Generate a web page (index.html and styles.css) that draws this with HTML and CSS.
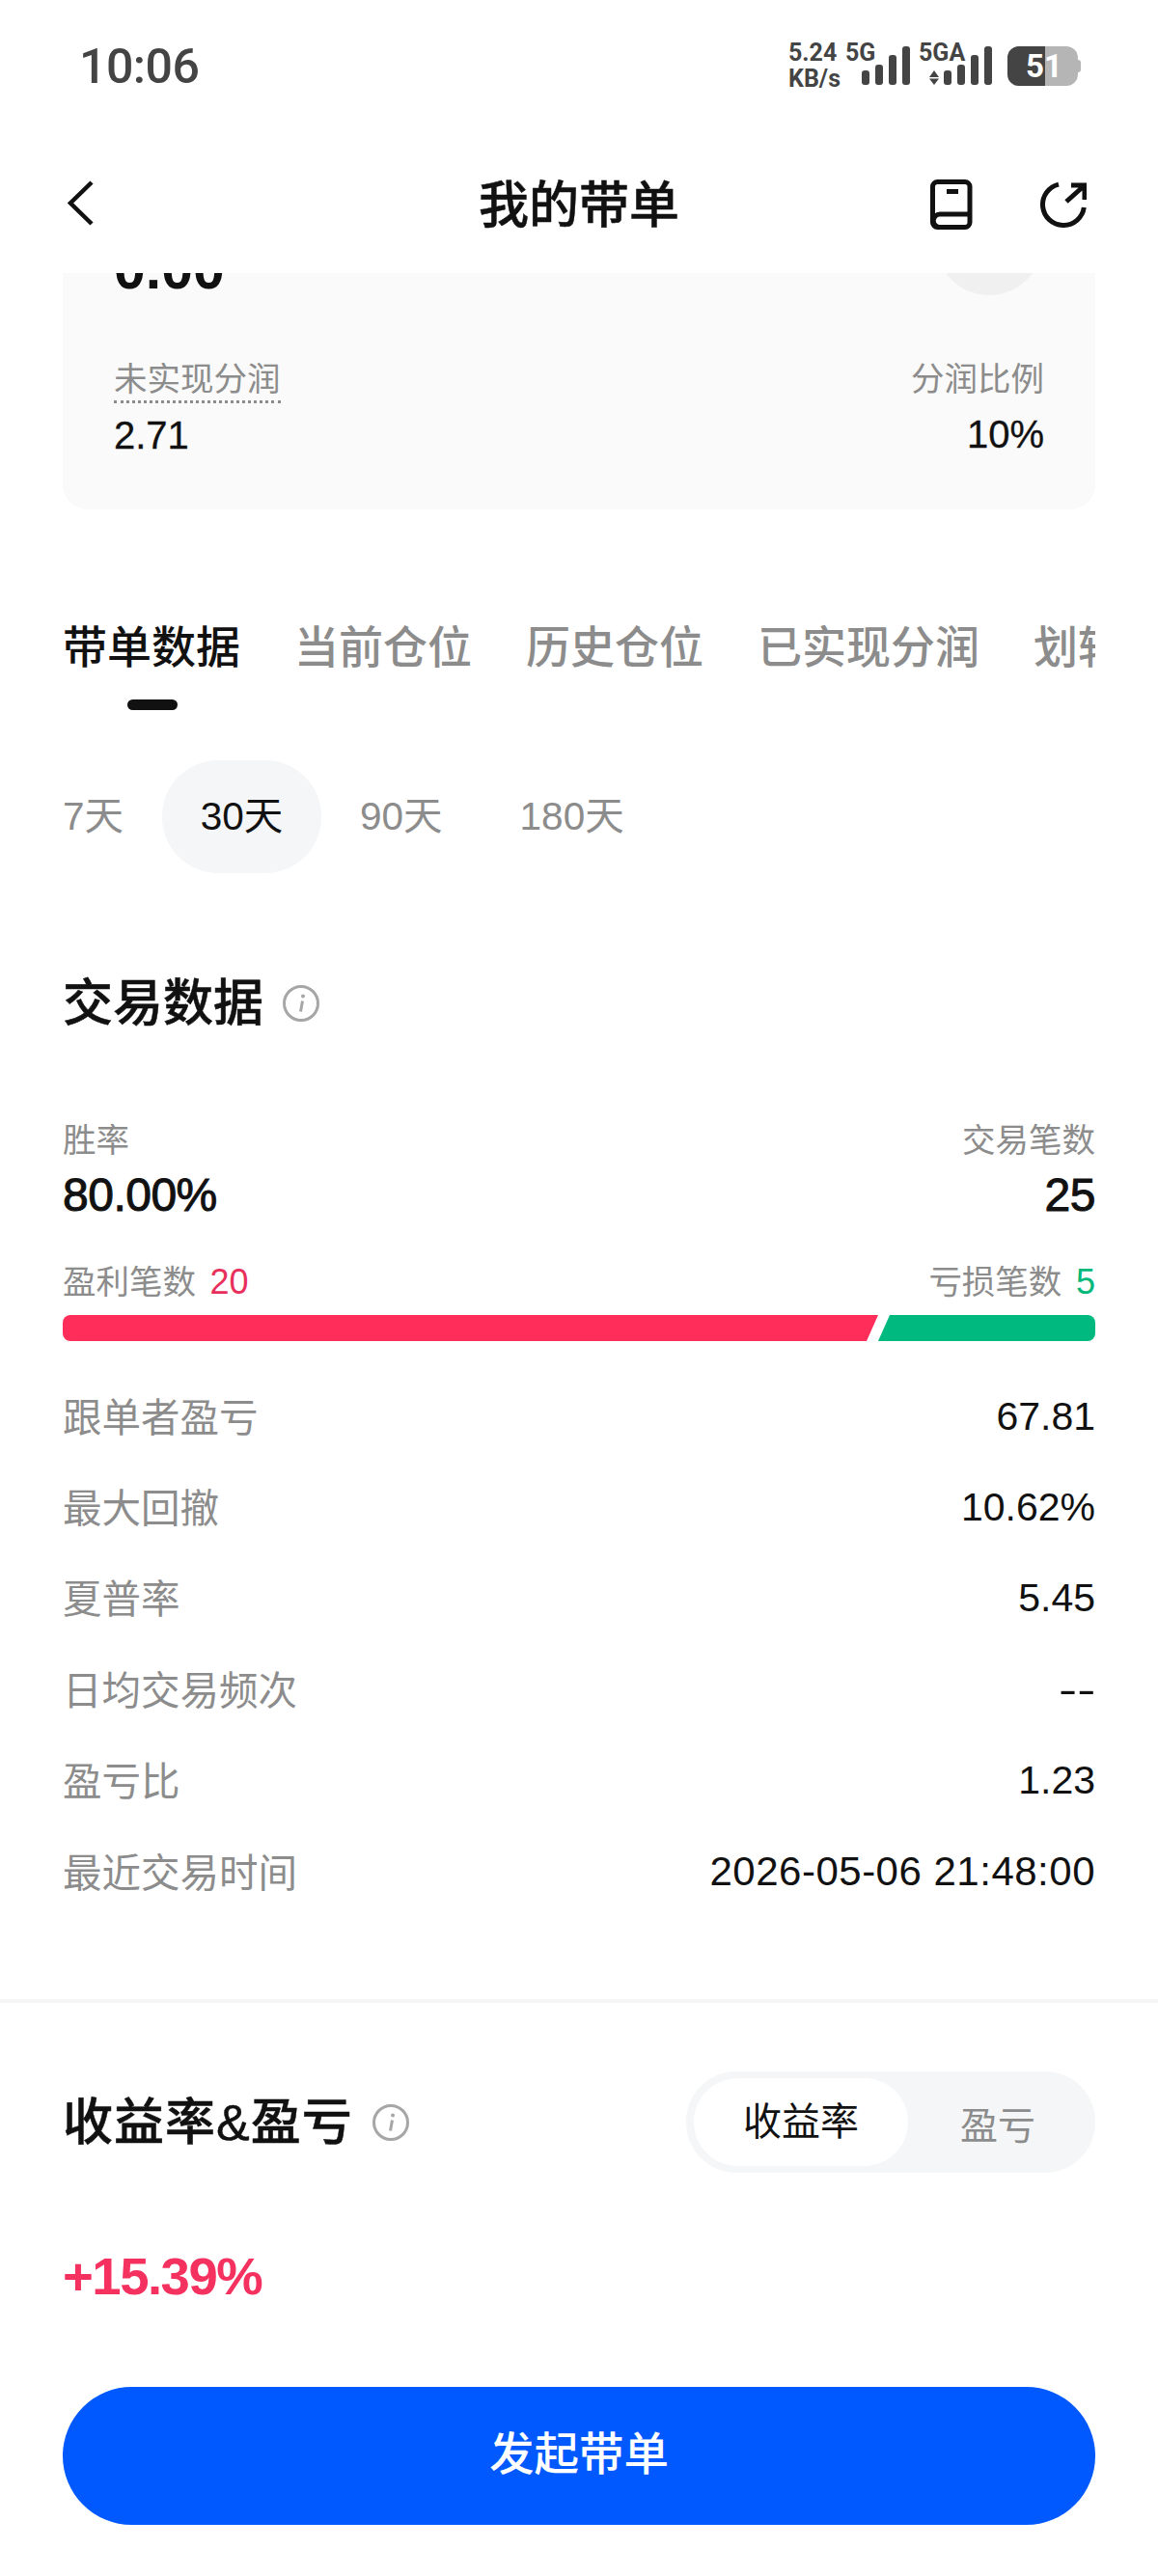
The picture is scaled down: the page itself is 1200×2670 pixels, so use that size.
FILE: index.html
```html
<!DOCTYPE html>
<html lang="zh">
<head>
<meta charset="utf-8">
<meta name="viewport" content="width=device-width, initial-scale=1">
<title>我的带单</title>
<link rel="stylesheet" href="styles.css">
</head>
<body>
<div class="phone">
  <div class="statusbar">
    <span class="clock">10:06</span>
    <div class="status-icons">
      <div class="speed">5.24<br>KB/s</div>
      <div class="net">
        <span class="net-name">5G</span>
        <svg class="signal" width="51" height="40" viewBox="0 0 51 40"><rect x="0" y="25" width="8" height="15" rx="3"/><rect x="14" y="19" width="8" height="21" rx="3"/><rect x="28" y="9" width="8" height="31" rx="3"/><rect x="42" y="0" width="8" height="40" rx="3"/></svg>
      </div>
      <div class="net net-a">
        <span class="net-name">5GA</span>
        <svg class="signal" width="65" height="40" viewBox="0 0 65 40"><path d="M0 32l5-7 5 7zM0 33.500l5 6.500 5-6.500z"/><rect x="15" y="25" width="8" height="15" rx="3"/><rect x="29" y="19" width="8" height="21" rx="3"/><rect x="43" y="9" width="8" height="31" rx="3"/><rect x="57" y="0" width="8" height="40" rx="3"/></svg>
      </div>
      <div class="battery"><span class="battery-fill"></span><span class="battery-num">51</span></div>
    </div>
  </div>

  <div class="navbar">
    <svg class="nav-back" width="27" height="47" viewBox="0 0 27 47"><path d="M25 2L3 23.500 25 45" fill="none" stroke="#111" stroke-width="4.500"/></svg>
    <h1 class="nav-title">我的带单</h1>
    <div class="nav-actions">
      <svg width="44" height="52" viewBox="0 0 44 52"><rect x="2.500" y="2.500" width="38.500" height="47" rx="5" fill="none" stroke="#111" stroke-width="5"/><path d="M41 36H10a6.500 6.500 0 0 0 0 13.500" fill="none" stroke="#111" stroke-width="5"/><rect x="17" y="10" width="12" height="5" fill="#111"/></svg>
      <svg width="48" height="48" viewBox="0 0 48 48"><path d="M19 3.100A21.500 21.500 0 1 0 45.300 27" fill="none" stroke="#111" stroke-width="5"/><path d="M32 4h14v15M46 4L27 21" fill="none" stroke="#111" stroke-width="5"/></svg>
    </div>
  </div>

  <div class="content">
    <div class="card">
      <div class="card-top">
        <span class="card-total">0.00</span>
        <span class="card-circle"></span>
      </div>
      <div class="card-row">
        <div>
          <div class="label"><span class="dotted">未实现分润</span></div>
          <div class="card-val">2.71</div>
        </div>
        <div class="right">
          <div class="label">分润比例</div>
          <div class="card-val">10%</div>
        </div>
      </div>
    </div>

    <div class="tabs">
      <div class="tab tab-on">带单数据<i class="tab-line"></i></div>
      <div class="tab">当前仓位</div>
      <div class="tab">历史仓位</div>
      <div class="tab">已实现分润</div>
      <div class="tab">划转记录</div>
    </div>

    <div class="periods">
      <span class="period">7天</span>
      <span class="period period-on">30天</span>
      <span class="period">90天</span>
      <span class="period">180天</span>
    </div>

    <div class="sec-head">
      <h2 class="sec-title">交易数据</h2>
      <svg class="info" width="38" height="38" viewBox="0 0 38 38"><circle cx="19" cy="19" r="17.500" fill="none" stroke="#a6a6a6" stroke-width="3"/><path d="M20.500 16.500l-2 11" stroke="#a6a6a6" stroke-width="3" fill="none"/><circle cx="21" cy="11.500" r="2" fill="#a6a6a6"/></svg>
    </div>

    <div class="summary">
      <div>
        <div class="label">胜率</div>
        <div class="big-val">80.00%</div>
      </div>
      <div class="right">
        <div class="label">交易笔数</div>
        <div class="big-val">25</div>
      </div>
    </div>

    <div class="ratio-labels">
      <div class="label">盈利笔数 <span class="num-red">20</span></div>
      <div class="label">亏损笔数 <span class="num-green">5</span></div>
    </div>
    <div class="ratio-bar">
      <span class="bar-red"></span>
      <span class="bar-green"></span>
    </div>

    <div class="stats">
      <div class="stat"><span>跟单者盈亏</span><b>67.81</b></div>
      <div class="stat"><span>最大回撤</span><b>10.62%</b></div>
      <div class="stat"><span>夏普率</span><b>5.45</b></div>
      <div class="stat"><span>日均交易频次</span><b class="stat-dash">--</b></div>
      <div class="stat"><span>盈亏比</span><b>1.23</b></div>
      <div class="stat"><span>最近交易时间</span><b class="stat-date">2026-05-06 21:48:00</b></div>
    </div>

    <div class="divider"></div>

    <div class="profit-head">
      <div class="sec-head sec-head-flat">
        <h2 class="sec-title sec-title-wide">收益率&amp;盈亏</h2>
        <svg class="info" width="38" height="38" viewBox="0 0 38 38"><circle cx="19" cy="19" r="17.500" fill="none" stroke="#a6a6a6" stroke-width="3"/><path d="M20.500 16.500l-2 11" stroke="#a6a6a6" stroke-width="3" fill="none"/><circle cx="21" cy="11.500" r="2" fill="#a6a6a6"/></svg>
      </div>
      <div class="switch">
        <span class="switch-on">收益率</span>
        <span class="switch-off">盈亏</span>
      </div>
    </div>

    <div class="profit">+15.39%</div>
  </div>

  <div class="footer">
    <button class="cta">发起带单</button>
  </div>
</div>
</body>
</html>
```

FILE: styles.css
```css
* {
  box-sizing: border-box;
}
html, body {
  margin: 0;
  padding: 0;
  background: #fff;
}
body {
  font-family: "Liberation Sans", "Noto Sans CJK SC", sans-serif;
  color: #111;
}
.phone {
  width: 1200px;
  height: 2670px;
  display: flex;
  flex-direction: column;
  overflow: hidden;
  background: #fff;
}

/* status bar */
.statusbar {
  height: 140px;
  flex: none;
  display: flex;
  justify-content: space-between;
  align-items: flex-start;
  padding: 41px 83px 0 82px;
}
.clock {
  font-family: Roboto, sans-serif;
  font-size: 50px;
  line-height: 56px;
  font-weight: 500;
  letter-spacing: -0.5px;
  color: #444;
}
.status-icons {
  display: flex;
  align-items: flex-start;
  padding-top: 3px;
  color: #444;
}
.speed {
  width: 59px;
  margin-top: -3px;
  font-family: Roboto, sans-serif;
  font-size: 25px;
  line-height: 27px;
  font-weight: 700;
}
.net {
  display: flex;
  position: relative;
  width: 76px;
  height: 46px;
}
.net-name {
  margin-top: -3px;
  font-family: Roboto, sans-serif;
  font-size: 25px;
  line-height: 27px;
  font-weight: 700;
}
.net .signal {
  position: absolute;
  left: 17px;
  top: 4px;
  fill: #444;
}
.net-a {
  width: 92px;
}
.net-a .signal {
  left: 11px;
}
.battery {
  position: relative;
  width: 73px;
  height: 41px;
  margin-top: 4px;
  border-radius: 12px;
  background: #b5b5b5;
}
.battery::after {
  content: "";
  position: absolute;
  right: -3px;
  top: 14px;
  width: 3px;
  height: 13px;
  border-radius: 0 3px 3px 0;
  background: #b5b5b5;
}
.battery-fill {
  display: block;
  width: 39px;
  height: 41px;
  border-radius: 12px 0 0 12px;
  background: #444;
}
.battery-num {
  position: absolute;
  left: 19px;
  top: 0;
  font-family: Roboto, sans-serif;
  font-size: 33px;
  line-height: 41px;
  font-weight: 700;
  color: #fff;
}

/* nav */
.navbar {
  height: 143px;
  flex: none;
  display: flex;
  justify-content: space-between;
  align-items: center;
  position: relative;
  padding: 0 74px 0 70px;
  background: #fff;
}
.nav-back {
  margin-top: -2px;
}
.nav-title {
  position: absolute;
  left: 0;
  right: 0;
  top: 41px;
  margin: 0;
  text-align: center;
  font-size: 52px;
  line-height: 64px;
  font-weight: 500;
  -webkit-text-stroke: 0.5px #111;
}
.nav-actions {
  display: flex;
  align-items: center;
  gap: 70px;
}

/* scrolled content */
.content {
  flex: 1;
  overflow: hidden;
  padding: 0 65px;
}
.card {
  margin-top: -118px;
  height: 363px;
  padding: 0 53px;
  border-radius: 26px;
  background: #fafafa;
}
.card-top {
  height: 204px;
  display: flex;
  justify-content: space-between;
  align-items: flex-end;
}
.card-total {
  font-size: 59px;
  line-height: 70px;
  font-weight: 700;
  margin-bottom: 55px;
}
.card-circle {
  width: 110px;
  height: 110px;
  margin-right: 2px;
  margin-bottom: 63px;
  border-radius: 50%;
  background: #f0f0f0;
}
.card-row {
  display: flex;
  justify-content: space-between;
}
.right {
  text-align: right;
}
.label {
  font-size: 34.500px;
  line-height: 48px;
  color: #8c8c8c;
}
.dotted {
  display: inline-block;
  line-height: 44px;
  border-bottom: 3px dotted #8c8c8c;
}
.card-val {
  font-size: 40px;
  line-height: 50px;
  margin-top: 8px;
  -webkit-text-stroke: 0.3px #111;
}

/* tabs */
.tabs {
  display: flex;
  gap: 56px;
  margin-top: 110px;
  overflow: hidden;
  white-space: nowrap;
}
.tab {
  position: relative;
  flex: none;
  font-size: 46px;
  line-height: 66px;
  padding-bottom: 84px;
  font-weight: 500;
  color: #8c8c8c;
}
.tab-on {
  color: #111;
}
.tab-line {
  position: absolute;
  left: 67px;
  top: 87px;
  width: 52px;
  height: 11px;
  border-radius: 6px;
  background: #111;
}
.periods {
  display: flex;
  align-items: center;
}
.period {
  font-size: 40.500px;
  line-height: 117px;
  color: #8c8c8c;
  padding: 0 40px;
}
.period:first-child {
  padding-left: 0;
}
.period-on {
  color: #111;
  width: 165px;
  text-align: center;
  padding: 0;
  border-radius: 58px;
  background: #f5f6f7;
}

/* trade data */
.sec-head {
  display: flex;
  align-items: center;
  gap: 20px;
  margin-top: 100px;
}
.sec-head-flat {
  margin-top: 0;
}
.sec-title {
  margin: 0;
  font-size: 52px;
  line-height: 70px;
  font-weight: 500;
  -webkit-text-stroke: 0.5px #111;
}
.sec-title-wide {
  letter-spacing: 1px;
}
.summary {
  display: flex;
  justify-content: space-between;
  margin-top: 83px;
}
.big-val {
  font-size: 48px;
  line-height: 56px;
  letter-spacing: -0.5px;
  -webkit-text-stroke: 1px #111;
  margin-top: 5px;
}
.ratio-labels {
  display: flex;
  justify-content: space-between;
  margin-top: 38px;
}
.num-red {
  margin-left: 5px;
  font-size: 36px;
  color: #e8305c;
}
.num-green {
  margin-left: 5px;
  font-size: 36px;
  color: #00b87a;
}
.ratio-bar {
  display: flex;
  height: 27px;
  margin-top: 10px;
}
.bar-red {
  width: 845px;
  border-radius: 8px 0 0 8px;
  background: #ff2d5a;
  clip-path: polygon(0 0, 100% 0, calc(100% - 12px) 100%, 0 100%);
}
.bar-green {
  width: 225px;
  border-radius: 0 8px 8px 0;
  background: #00b97f;
  clip-path: polygon(12px 0, 100% 0, 100% 100%, 0 100%);
}
.stats {
  margin-top: 30px;
}
.stat {
  display: flex;
  justify-content: space-between;
  align-items: center;
  height: 94.400px;
  font-size: 40.500px;
}
.stat span {
  margin-top: -2px;
  color: #8c8c8c;
}
.stat b {
  margin-top: 2px;
  font-weight: 400;
  font-size: 41px;
}
.stat .stat-date {
  font-size: 42px;
  letter-spacing: 0.5px;
}
.stat .stat-dash {
  display: inline-block;
  transform: scaleX(1.4);
  transform-origin: right center;
}
.divider {
  height: 4px;
  margin: 86px -65px 0;
  background: #f5f5f5;
}

/* profit */
.profit-head {
  display: flex;
  justify-content: space-between;
  align-items: center;
  margin-top: 71px;
}
.switch {
  display: flex;
  align-items: center;
  width: 424px;
  height: 105px;
  padding: 0 8px;
  border-radius: 52px;
  background: #f5f6f7;
}
.switch-on {
  width: 222px;
  height: 91px;
  line-height: 91px;
  text-align: center;
  font-size: 40px;
  border-radius: 46px;
  background: #fff;
}
.switch-off {
  flex: 1;
  text-align: center;
  font-size: 39px;
  color: #8c8c8c;
}
.profit {
  font-size: 54.500px;
  line-height: 64px;
  font-weight: 700;
  letter-spacing: -1.500px;
  color: #f5315f;
  margin-top: 76px;
}

/* button */
.footer {
  flex: none;
  height: 196px;
  padding: 0 65px;
  background: #fff;
}
.cta {
  display: block;
  width: 100%;
  height: 143px;
  padding: 0 0 13px;
  border: 0;
  border-radius: 72px;
  background: #0059ff;
  color: #fff;
  font-family: inherit;
  font-size: 46.500px;
  font-weight: 500;
}
```
